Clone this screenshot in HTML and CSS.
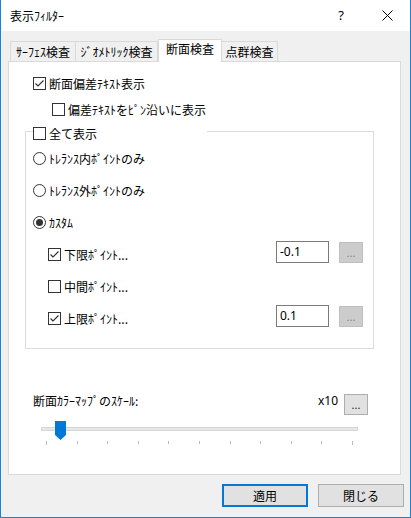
FILE: index.html
```html
<!DOCTYPE html>
<html lang="ja">
<head>
<meta charset="utf-8">
<title>表示ﾌｨﾙﾀｰ</title>
<link rel="stylesheet" href="styles.css">
</head>
<body>
<div class="window">
  <div class="titlebar">
    <span class="title">表示ﾌｨﾙﾀｰ</span>
    <span class="cap cap-help">?</span>
    <span class="cap cap-close"><svg width="11" height="11" viewBox="0 0 11 11"><path d="M0.5 0.5 L10.5 10.5 M10.5 0.5 L0.5 10.5" stroke="#000" stroke-width="1" fill="none"/></svg></span>
  </div>
  <div class="content">
    <div class="tabs">
      <div class="tab t1">ｻｰﾌｪｽ検査</div>
      <div class="tab t2">ｼﾞｵﾒﾄﾘｯｸ検査</div>
      <div class="tab t3 active">断面検査</div>
      <div class="tab t4">点群検査</div>
    </div>
    <div class="panel">
      <div class="row">
        <span class="cb"><svg width="11" height="11" viewBox="0 0 11 11"><path d="M1.5 5.5 L4 8 L9.5 2.5" stroke="#333" stroke-width="1.2" fill="none"/></svg></span>
        <span class="txt">断面偏差ﾃｷｽﾄ表示</span>
      </div>
      <div class="row ind">
        <span class="cb"></span>
        <span class="txt">偏差ﾃｷｽﾄをﾋﾟﾝ沿いに表示</span>
      </div>
      <div class="group">
        <div class="row ghead">
          <span class="cb"></span>
          <span class="txt">全て表示</span>
        </div>
        <div class="row r-first">
          <span class="radio"></span>
          <span class="txt">ﾄﾚﾗﾝｽ内ﾎﾟｲﾝﾄのみ</span>
        </div>
        <div class="row r-next">
          <span class="radio"></span>
          <span class="txt">ﾄﾚﾗﾝｽ外ﾎﾟｲﾝﾄのみ</span>
        </div>
        <div class="row r-next">
          <span class="radio on"><span class="dot"></span></span>
          <span class="txt">ｶｽﾀﾑ</span>
        </div>
        <div class="prow p-first">
          <div class="row plbl">
            <span class="cb"><svg width="11" height="11" viewBox="0 0 11 11"><path d="M1.5 5.5 L4 8 L9.5 2.5" stroke="#333" stroke-width="1.2" fill="none"/></svg></span>
            <span class="txt">下限ﾎﾟｲﾝﾄ...</span>
          </div>
          <div class="num">-0.1</div>
          <div class="dbtn disabled">...</div>
        </div>
        <div class="prow">
          <div class="row plbl">
            <span class="cb"></span>
            <span class="txt">中間ﾎﾟｲﾝﾄ...</span>
          </div>
        </div>
        <div class="prow">
          <div class="row plbl">
            <span class="cb"><svg width="11" height="11" viewBox="0 0 11 11"><path d="M1.5 5.5 L4 8 L9.5 2.5" stroke="#333" stroke-width="1.2" fill="none"/></svg></span>
            <span class="txt">上限ﾎﾟｲﾝﾄ...</span>
          </div>
          <div class="num">0.1</div>
          <div class="dbtn disabled">...</div>
        </div>
      </div>
      <div class="scale">
        <span class="slbl">断面ｶﾗｰﾏｯﾌﾟのｽｹｰﾙ:</span>
        <span class="x10">x10</span>
        <div class="dbtn sbtn">...</div>
      </div>
      <div class="slider">
        <div class="track"></div>
        <svg class="thumb" width="11" height="19" viewBox="0 0 11 19"><polygon points="0,0 11,0 11,14 5.5,19 0,14" fill="#0078d7"/></svg>
        <div class="ticks">
          <span class="tick end"></span><span class="tick"></span><span class="tick"></span><span class="tick"></span><span class="tick"></span><span class="tick"></span><span class="tick"></span><span class="tick"></span><span class="tick"></span><span class="tick"></span><span class="tick end"></span>
        </div>
      </div>
    </div>
  </div>
  <div class="actions">
    <div class="btn default">適用</div>
    <div class="btn">閉じる</div>
  </div>
</div>
</body>
</html>
```
FILE: styles.css
```css
* { box-sizing: border-box; }
html, body { margin: 0; padding: 0; }
body {
  width: 411px;
  height: 518px;
  overflow: hidden;
  font-family: "Noto Sans CJK JP", "Noto Sans", sans-serif;
  font-size: 12px;
  color: #000;
  background: #f0f0f0;
}
.window {
  width: 411px;
  height: 518px;
  background: #f0f0f0;
  border: 1px solid #1883d7;
  border-top: none;
  display: flex;
  flex-direction: column;
}
.titlebar {
  flex: none;
  height: 31px;
  background: #fff;
  display: flex;
  align-items: center;
  padding-left: 9px;
}
.title { flex: 1; line-height: 14px; }
.cap {
  width: 46px;
  height: 31px;
  display: flex;
  align-items: center;
  justify-content: center;
}
.cap-help { font-family: "Noto Sans", sans-serif; font-size: 13px; padding-bottom: 1px; }
.cap svg { display: block; }

.content { padding: 8px 9px 0 7px; }
.tabs {
  display: flex;
  align-items: flex-end;
  height: 22px;
  margin-left: 2px;
}
.tab {
  height: 20px;
  border: 1px solid #d9d9d9;
  border-bottom: none;
  padding-top: 3px;
  line-height: 14px;
  text-align: center;
  background: #f0f0f0;
  white-space: nowrap;
}
.t1 { width: 66px; }
.t2 { width: 82px; border-left: none; }
.t3 { width: 64px; }
.t4 { width: 56px; border-left: none; }
.tab.active {
  height: 23px;
  margin-bottom: -1px;
  padding-top: 2px;
  background: #fff;
  position: relative;
  z-index: 1;
}

.panel {
  height: 414px;
  border: 1px solid #d9d9d9;
  background: #fff;
  padding: 15px 0 0 24px;
}
.row {
  display: flex;
  align-items: center;
  height: 13px;
}
.txt { margin-left: 3px; line-height: 14px; white-space: nowrap; }
.cb {
  flex: none;
  width: 13px;
  height: 13px;
  border: 1px solid #333;
  background: #fff;
}
.cb svg { display: block; }
.ind { margin-left: 19px; margin-top: 13px; }

.group {
  margin: 15px 0 0 -8px;
  width: 349px;
  border: 1px solid #dcdcdc;
  padding: 0 10px 21px 7px;
}
.ghead {
  margin-top: -5px;
  width: 174px;
  background: #fff;
}
.radio {
  flex: none;
  width: 13px;
  height: 13px;
  border: 1px solid #333;
  border-radius: 50%;
  display: flex;
  align-items: center;
  justify-content: center;
}
.dot { width: 7px; height: 7px; border-radius: 50%; background: #333; }
.r-first { margin-top: 12px; }
.r-next { margin-top: 19px; }

.prow {
  display: flex;
  align-items: flex-start;
  height: 22px;
  margin-top: 10px;
}
.p-first { margin-top: 12px; }
.plbl { margin: 7px 0 0 15px; }
.num {
  margin-left: auto;
  width: 53px;
  height: 22px;
  border: 1px solid #7a7a7a;
  background: #fff;
  padding-left: 3px;
  line-height: 20px;
  font-family: "Noto Sans", sans-serif;
  font-size: 12px;
}
.dbtn {
  flex: none;
  width: 24px;
  height: 21px;
  display: flex;
  align-items: center;
  justify-content: center;
  font-family: "Noto Sans", sans-serif;
  font-size: 11px;
  line-height: 14px;
}
.dbtn.disabled {
  margin: 1px 0 0 10px;
  border: 1px solid #bfbfbf;
  background: #cccccc;
  color: #838383;
}

.scale {
  display: flex;
  align-items: flex-start;
  height: 21px;
  margin: 45px 32px 0 0;
}
.slbl { line-height: 14px; white-space: nowrap; }
.x10 {
  margin-left: auto;
  line-height: 14px;
  font-family: "Noto Sans", sans-serif;
  font-size: 12px;
}
.sbtn {
  margin-left: 6px;
  border: 1px solid #adadad;
  background: #e1e1e1;
  color: #222;
}

.slider {
  position: relative;
  margin: 6px 0 0 8px;
  width: 317px;
  padding-top: 6px;
}
.track {
  height: 4px;
  border: 1px solid #d6d6d6;
  background: #e7e7e7;
}
.thumb { position: absolute; left: 14px; top: 0; display: block; }
.ticks {
  display: flex;
  justify-content: space-between;
  align-items: flex-start;
  margin: 10px 5px 0 5px;
}
.tick { width: 1px; height: 3px; background: #bcbcbc; }
.tick.end { height: 4px; }

.actions {
  display: flex;
  justify-content: flex-end;
  gap: 10px;
  padding-right: 6px;
  margin-top: 9px;
}
.btn {
  width: 86px;
  height: 23px;
  border: 1px solid #adadad;
  background: #e1e1e1;
  display: flex;
  align-items: center;
  justify-content: center;
  line-height: 14px;
}
.btn.default { border: 2px solid #0078d7; }
```
